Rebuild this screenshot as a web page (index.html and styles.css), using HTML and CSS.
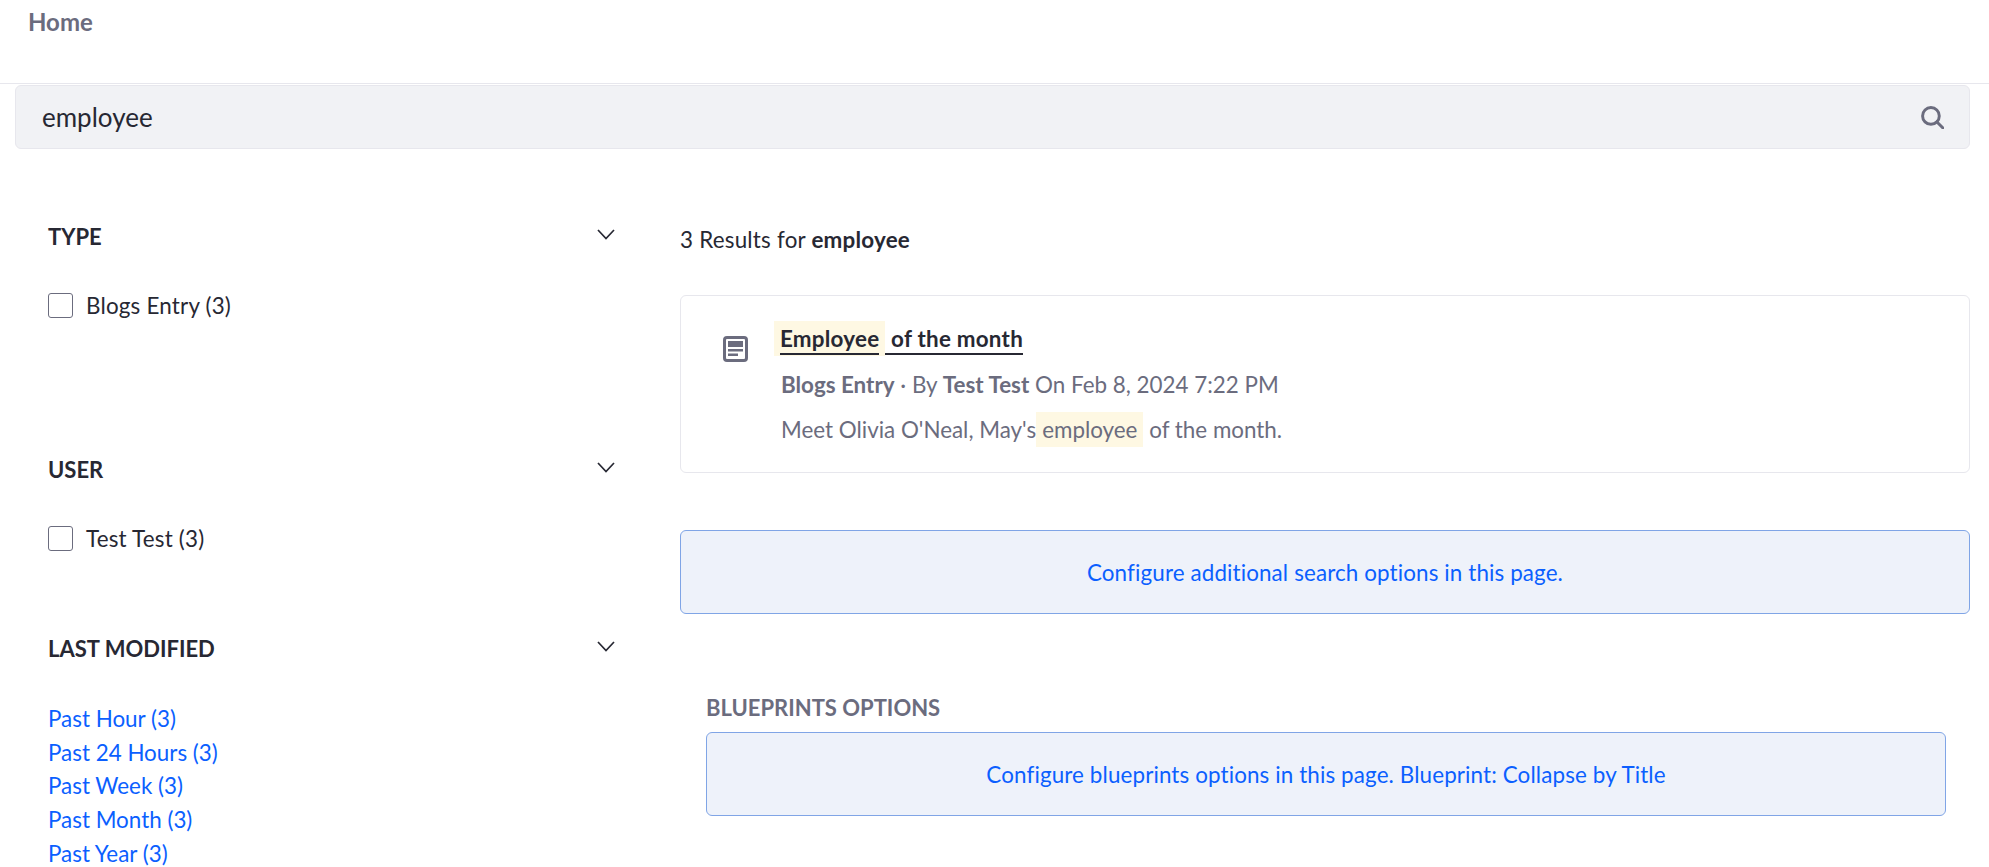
FILE: index.html
```html
<!DOCTYPE html>
<html lang="en">
<head>
<meta charset="utf-8">
<title>Search</title>
<link rel="stylesheet" href="styles.css">
</head>
<body>
<header class="topbar"><a class="home" href="#">Home</a></header>
<div class="searchbar">
  <span class="query">employee</span>
  <svg class="search-icon" viewBox="0 0 22 22" aria-hidden="true"><circle cx="9.5" cy="9.5" r="8" /><path d="M15.3 15.3 21 21" /></svg>
</div>
<div class="layout">
  <aside class="sidebar">
    <section class="facet facet-type">
      <div class="facet-head"><h3>TYPE</h3><svg class="chevron" viewBox="0 0 18 11" aria-hidden="true"><path d="M1 1l8 8.5L17 1" /></svg></div>
      <label class="check"><span class="box"></span><span class="check-label">Blogs Entry (3)</span></label>
    </section>
    <section class="facet facet-user">
      <div class="facet-head"><h3>USER</h3><svg class="chevron" viewBox="0 0 18 11" aria-hidden="true"><path d="M1 1l8 8.5L17 1" /></svg></div>
      <label class="check"><span class="box"></span><span class="check-label">Test Test (3)</span></label>
    </section>
    <section class="facet facet-date">
      <div class="facet-head"><h3>LAST MODIFIED</h3><svg class="chevron" viewBox="0 0 18 11" aria-hidden="true"><path d="M1 1l8 8.5L17 1" /></svg></div>
      <ul class="links">
        <li><a href="#">Past Hour (3)</a></li>
        <li><a href="#">Past 24 Hours (3)</a></li>
        <li><a href="#">Past Week (3)</a></li>
        <li><a href="#">Past Month (3)</a></li>
        <li><a href="#">Past Year (3)</a></li>
      </ul>
    </section>
  </aside>
  <main class="results">
    <p class="summary">3 Results for <strong>employee</strong></p>
    <article class="card">
      <svg class="doc-icon" viewBox="0 0 25 26" aria-hidden="true"><rect x="1.5" y="1.5" width="22" height="23" rx="2.5" class="doc-frame" /><rect x="5" y="5" width="15" height="6" class="doc-fill" /><rect x="5" y="13" width="15" height="2.5" class="doc-fill" /><rect x="5" y="17.5" width="10" height="2.5" class="doc-fill" /></svg>
      <div class="card-body">
        <a class="title" href="#"><mark class="hl"><span class="ul">Employee</span></mark><span class="ul"> of the month</span></a>
        <p class="meta"><b>Blogs Entry</b> · By <b>Test Test</b> On Feb 8, 2024 7:22 PM</p>
        <p class="excerpt">Meet Olivia O'Neal, May's<mark class="hl">employee</mark> of the month.</p>
      </div>
    </article>
    <a class="alert" href="#">Configure additional search options in this page.</a>
    <section class="blueprints">
      <h4>BLUEPRINTS OPTIONS</h4>
      <a class="alert" href="#">Configure blueprints options in this page. Blueprint: Collapse by Title</a>
    </section>
  </main>
</div>
</body>
</html>
```

FILE: styles.css
```css
* { box-sizing: border-box; }
html, body { margin: 0; padding: 0; height: 867px; overflow: hidden; }
body { background: #fff; color: #272833; font-family: "Lato", "Open Sans", sans-serif; font-size: 22.4px; }
p, h3, h4, ul { margin: 0; padding: 0; }
a { text-decoration: none; }

.topbar { height: 84px; border-bottom: 1px solid #e7e7ed; padding: 7px 28px 0; }
.home { color: #6b6c7e; font-weight: 700; font-size: 24px; line-height: 30px; }

.searchbar { margin: 1px 19px 0 15px; height: 64px; background: #f1f2f5; border: 1px solid #e7e7ed; border-radius: 6px; display: flex; align-items: center; justify-content: space-between; padding: 0 25px 1px 26px; }
.query { font-size: 26px; color: #272833; }
.search-icon { width: 23px; height: 23px; fill: none; stroke: #6b6c7e; stroke-width: 2.8; stroke-linecap: square; margin-top: 1px; }

.layout { display: flex; padding: 0 19px 0 48px; }
.sidebar { width: 567px; flex: none; padding-top: 74px; }
.facet-head { display: flex; justify-content: space-between; height: 28px; }
.facet-head h3 { font-size: 22px; line-height: 28px; font-weight: 700; color: #272833; }
.chevron { width: 18px; height: 11px; margin-top: 6px; fill: none; stroke: #272833; stroke-width: 1.7; }
.check { display: flex; align-items: center; gap: 13px; line-height: 26px; margin-top: 40px; color: #272833; }
.check-label { padding-top: 2px; letter-spacing: 0.2px; }
.box { width: 25px; height: 25px; border: 1px solid #6b6c7e; border-radius: 3px; background: #fff; }
.facet-type { height: 233px; }
.facet-user { height: 179px; }
.links { list-style: none; margin-top: 39px; }
.links li { line-height: 33.7px; }
.links a { color: #0b5fff; }

.results { flex: 1; margin-left: 65px; padding-top: 77px; }
.summary { line-height: 28px; letter-spacing: 0.22px; }
.summary strong { font-weight: 700; }
.card { margin-top: 41px; height: 178px; border: 1px solid #e7e7ed; border-radius: 6px; display: flex; padding: 25px 0 0 42px; }
.doc-icon { width: 25px; height: 26px; margin-top: 15px; flex: none; }
.doc-frame { fill: none; stroke: #6b6c7e; stroke-width: 3; }
.doc-fill { fill: #6b6c7e; }
.card-body { margin-left: 33px; }
.hl { background: #fef8e3; color: inherit; display: inline-block; height: 35px; line-height: 35px; padding: 0 6px; margin: 0; }
.title { display: block; margin-left: -7px; font-weight: 700; color: #272833; height: 35px; line-height: 35px; white-space: pre; letter-spacing: 0.24px; }
.ul { border-bottom: 2px solid #272833; padding-bottom: 1px; }
.meta { margin-top: 15px; line-height: 28px; color: #6b6c7e; }
.meta b { font-weight: 700; }
.excerpt { margin-top: 13px; line-height: 35px; color: #6b6c7e; white-space: pre; }
.alert { display: flex; align-items: center; justify-content: center; height: 84px; margin-top: 57px; background: #eef2fa; border: 1px solid #80a5e6; border-radius: 6px; color: #0b5fff; letter-spacing: 0.12px; }
.blueprints { margin: 0 24px 0 26px; }
.blueprints h4 { margin-top: 80px; font-size: 22px; line-height: 28px; font-weight: 700; color: #6b6c7e; }
.blueprints .alert { margin-top: 10px; }
```
